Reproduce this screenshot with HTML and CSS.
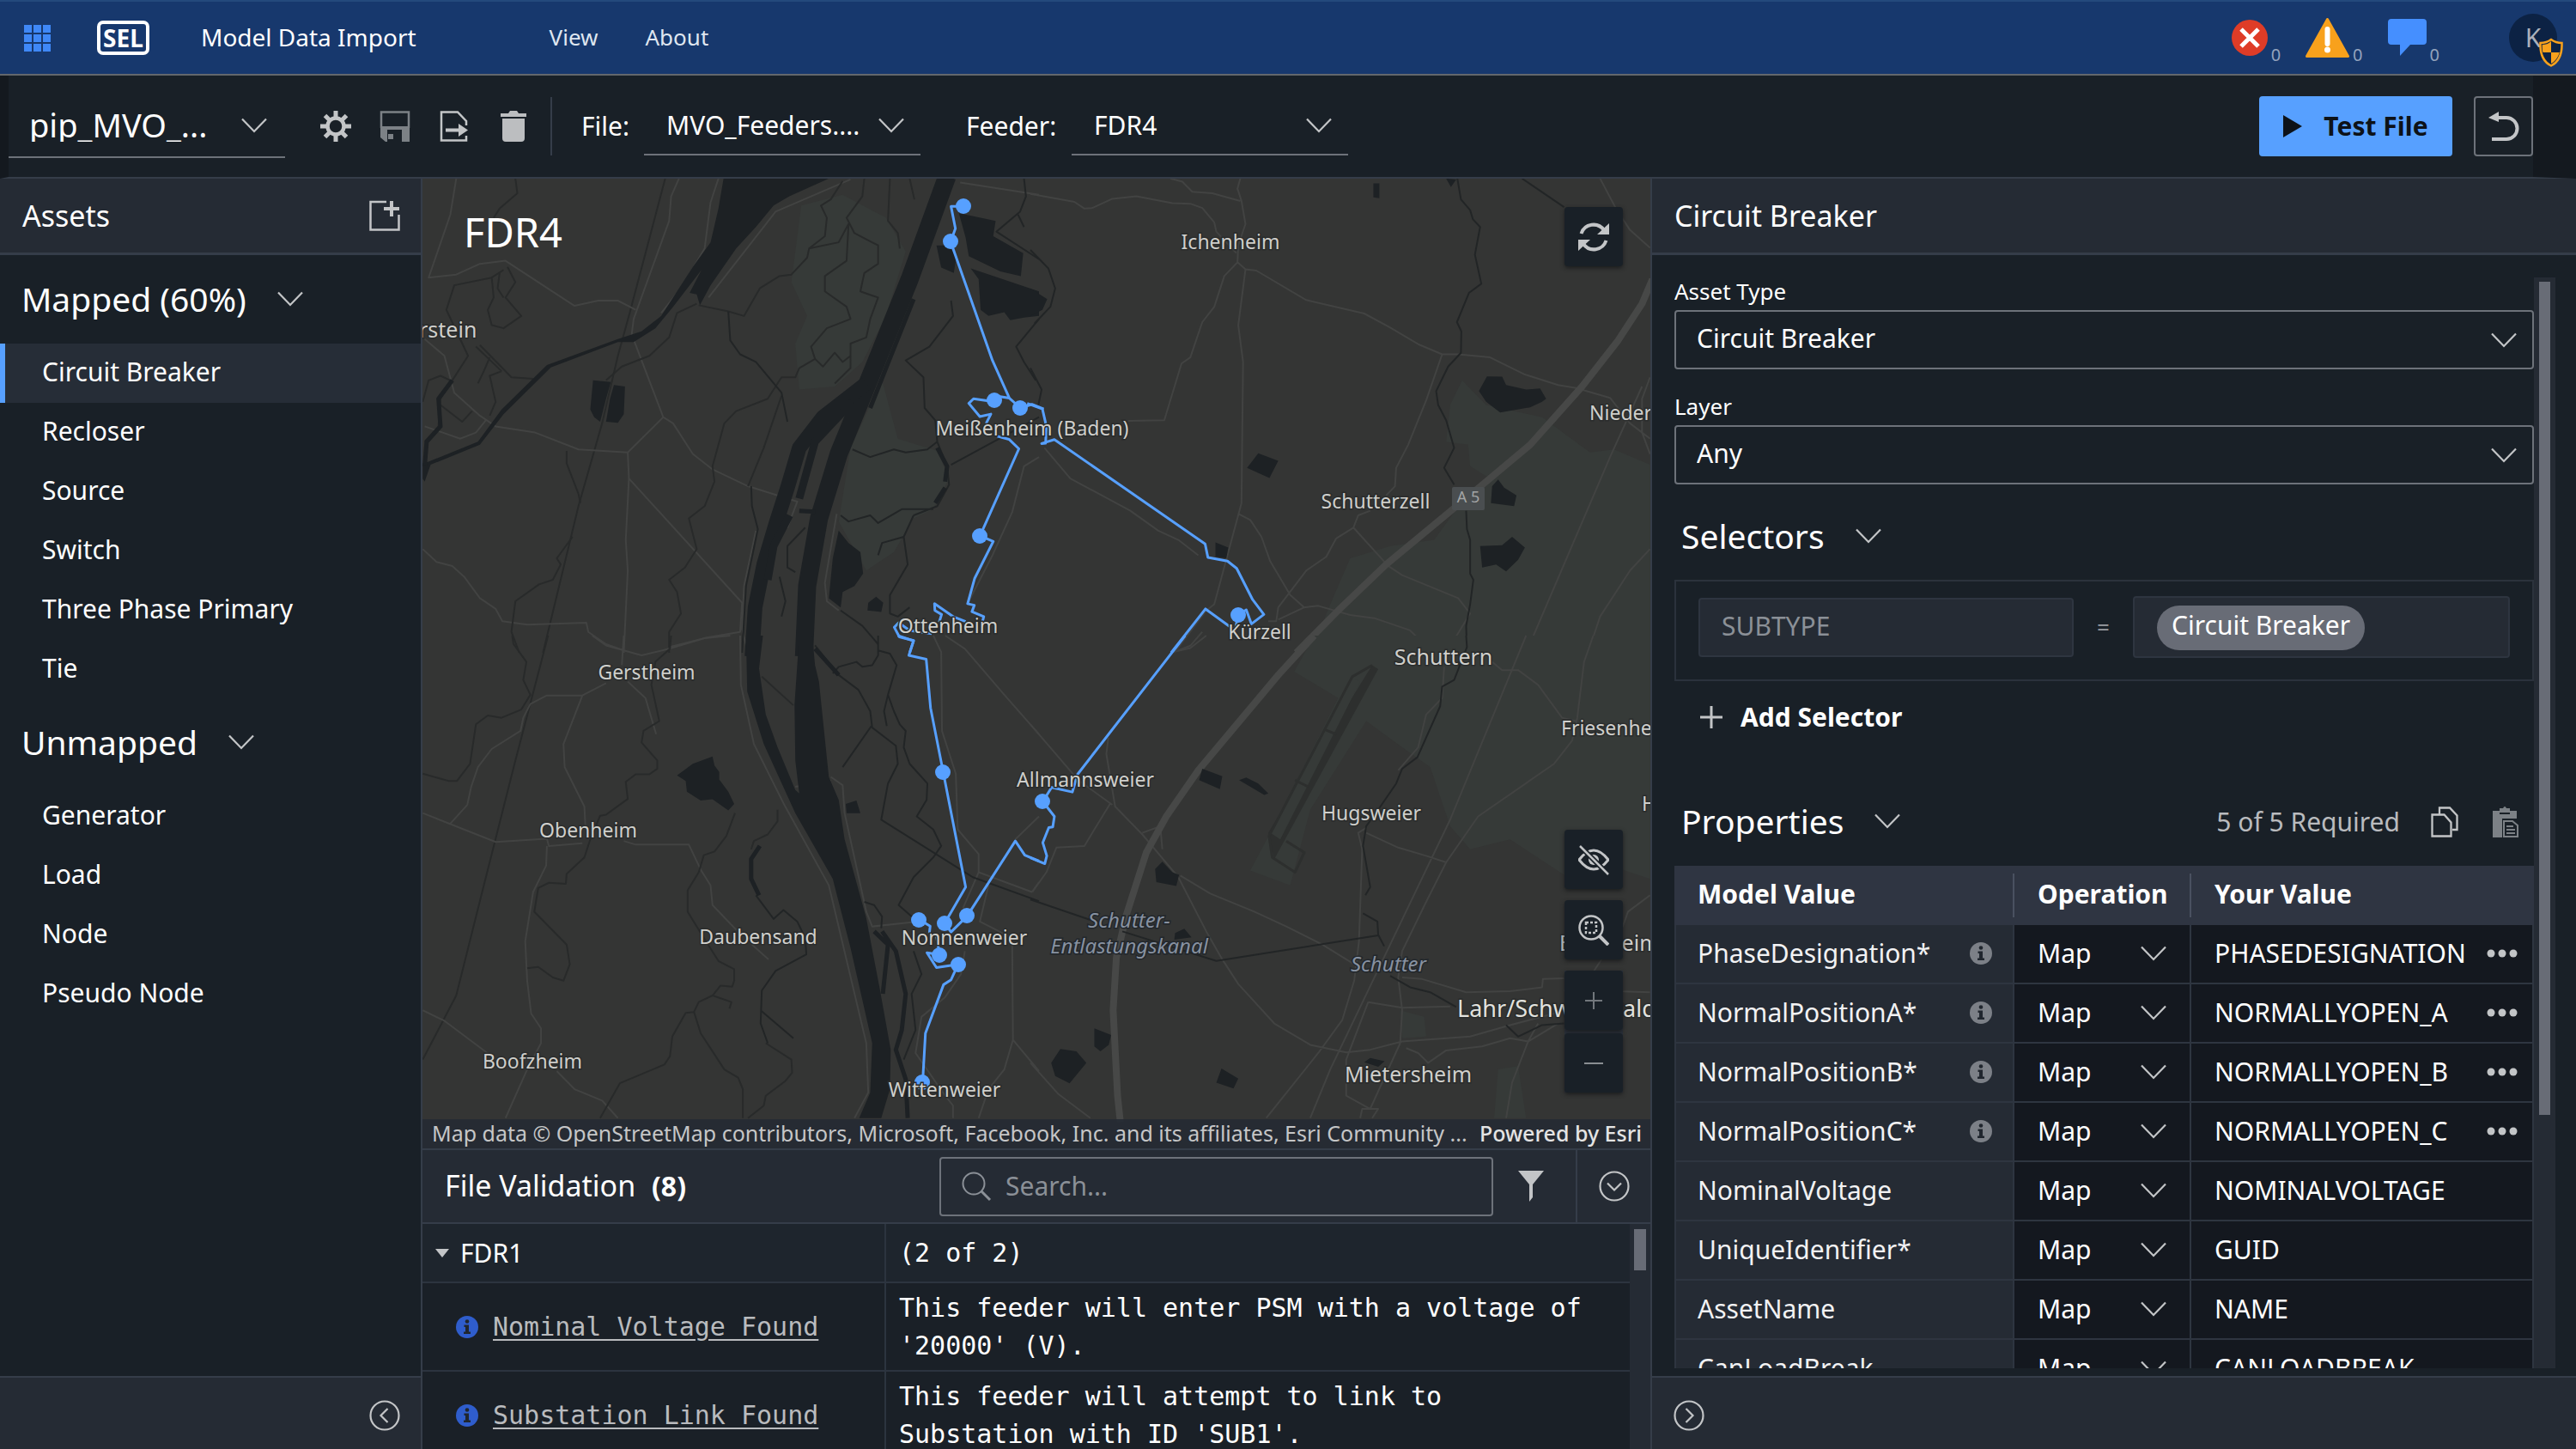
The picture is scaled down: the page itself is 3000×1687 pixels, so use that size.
FILE: index.html
```html
<!DOCTYPE html>
<html lang="en">
<head>
<meta charset="utf-8">
<title>Model Data Import</title>
<link rel="stylesheet" href="styles.css">
</head>
<body>
<svg class="sprite" aria-hidden="true">
  <symbol id="chevron" viewBox="0 0 30 18"><path d="M1 1.500 15 16 29 1.500" fill="none" stroke="currentColor" stroke-width="2.200"/></symbol>
  <symbol id="info" viewBox="0 0 26 26"><circle cx="13" cy="13" r="13" fill="currentColor"/><g fill="#20262e"><circle cx="13" cy="6.500" r="2.300"/><path d="M9.500 10.500h5.500v8h2v2.500h-8v-2.500h2V13h-1.500z"/></g></symbol>
  <symbol id="dots" viewBox="0 0 36 12"><g fill="currentColor"><circle cx="5" cy="6" r="4.500"/><circle cx="18" cy="6" r="4.500"/><circle cx="31" cy="6" r="4.500"/></g></symbol>
  <symbol id="round-chevron" viewBox="0 0 36 36"><g fill="none" stroke="currentColor" stroke-width="2.200"><circle cx="18" cy="18" r="16.500"/><path d="M21.500 10 13.500 18l8 8"/></g></symbol>
</svg>

<div class="app">
  <header class="topbar">
    <button class="icon-btn launcher" aria-label="Applications">
      <svg width="31" height="31" viewBox="0 0 31 31" fill="#3f88f7"><path d="M0 0h9v9H0zM11 0h9v9h-9zM22 0h9v9h-9zM0 11h9v9H0zM11 11h9v9h-9zM22 11h9v9h-9zM0 22h9v9H0zM11 22h9v9h-9zM22 22h9v9h-9z"/></svg>
    </button>
    <span class="logo">SEL</span>
    <h1 class="app-title">Model Data Import</h1>
    <nav class="menu"><a href="#view">View</a><a href="#about">About</a></nav>
    <div class="notices">
      <button class="notice" aria-label="Errors">
        <svg width="42" height="42" viewBox="0 0 42 42"><circle cx="21" cy="21" r="21" fill="#df3c27"/><path d="m11 11 20 20M31 11 11 31" stroke="#fff" stroke-width="5"/></svg><span>0</span></button>
      <button class="notice" aria-label="Warnings">
        <svg width="51" height="46" viewBox="0 0 51 46"><path d="M25.500 1.500 49.500 44.500h-48z" fill="#f8a11c" stroke="#f8a11c" stroke-width="3" stroke-linejoin="round"/><path d="M25.500 13v17" stroke="#fff" stroke-width="6" stroke-linecap="round"/><circle cx="25.500" cy="37" r="3.500" fill="#fff"/></svg><span>0</span></button>
      <button class="notice" aria-label="Messages">
        <svg width="45" height="44" viewBox="0 0 45 44"><path d="M4 0h37q4 0 4 4v22q0 4-4 4H26L14 43V30H4q-4 0-4-4V4q0-4 4-4z" fill="#458fff"/></svg><span>0</span></button>
    </div>
    <button class="avatar" aria-label="Account">K
      <svg class="shield" width="28" height="34" viewBox="0 0 28 34"><path d="M14 2c4 3 8 4 12.500 4C27 19 23 28 14 32.500 5 28 1 19 1.500 6 6 6 10 5 14 2z" fill="#0c2244" stroke="#f8a11c" stroke-width="2.500"/><path d="M14 4v13H4.500C3.700 14 3.500 11 3.800 8 7.500 8 11 7 14 4zM14 17h9.800C22 23 19 27.500 14 30z" fill="#f8a11c"/></svg>
    </button>
  </header>

  <div class="toolbar">
    <div class="drop drop-name"><select aria-label="Project"><option>pip_MVO_...</option></select><svg class="chev"><use href="#chevron"/></svg></div>
    <div class="tools">
      <button class="icon-btn" aria-label="Settings"><svg width="36" height="36" viewBox="0 0 36 36" fill="none" stroke="#c3c5c7"><circle cx="18" cy="18" r="9.500" stroke-width="4.500"/><path d="M18 0v8M18 28v8M0 18h8M28 18h8M5.500 5.500l5 5M25.500 25.500l5 5M30.500 5.500l-5 5M10.500 25.500l-5 5" stroke-width="5"/></svg></button>
      <button class="icon-btn" aria-label="Save"><svg width="36" height="36" viewBox="0 0 36 36"><path d="M2 20V1.500h32V20" fill="none" stroke="#7c8186" stroke-width="2.500"/><path d="M1 18h34v18h-9V22H9v14H7l-6-5z" fill="#7c8186"/><path d="M10 27h6v6h-6z" fill="#7c8186"/></svg></button>
      <button class="icon-btn" aria-label="Export"><svg width="36" height="36" viewBox="0 0 36 36"><path d="M32 17v-5L22 1.500H3v33h29V29" fill="none" stroke="#c3c5c7" stroke-width="2.500"/><path d="M8 20.500h15V15l11 7.500L23 30v-5.500H8z" fill="#c3c5c7"/></svg></button>
      <button class="icon-btn" aria-label="Delete"><svg width="36" height="36" viewBox="0 0 36 36" fill="#bcbec0"><path d="M3 3h9l2-3h8l2 3h9v4H3zM5 9h26v23q0 4-4 4H9q-4 0-4-4z"/></svg></button>
    </div>
    <label class="tool-label label-file" for="file">File:</label>
    <div class="drop drop-file"><select id="file"><option>MVO_Feeders....</option></select><svg class="chev"><use href="#chevron"/></svg></div>
    <label class="tool-label label-feeder" for="feeder">Feeder:</label>
    <div class="drop drop-feeder"><select id="feeder"><option>FDR4</option></select><svg class="chev"><use href="#chevron"/></svg></div>
    <div class="actions">
      <button class="primary"><svg width="22" height="26" viewBox="0 0 22 26"><path d="M0 0 22 13 0 26z" fill="#0d1218"/></svg>Test File</button>
      <button class="outline" aria-label="Undo"><svg width="36" height="36" viewBox="0 0 36 36"><path d="M12 1v12L0 8z" fill="#c3c5c7"/><path d="M9 8h12a12.500 12.500 0 0 1 0 25H4" fill="none" stroke="#c3c5c7" stroke-width="4"/></svg></button>
    </div>
  </div>

  <main class="columns">
    <aside class="side">
      <div class="panel-head"><h2>Assets</h2>
        <button class="icon-btn" aria-label="Add asset"><svg width="36" height="36" viewBox="0 0 36 36" fill="none" stroke="#c3c5c7"><path d="M20 2H1.500v32.500h33V17" stroke-width="2.500"/><path d="M26 1v18M17 10h18" stroke-width="4"/></svg></button>
      </div>
      <div class="side-body">
        <h3 class="section-title">Mapped (60%)<svg class="chev"><use href="#chevron"/></svg></h3>
        <ul class="assets">
          <li><a class="current" href="#cb">Circuit Breaker</a></li>
          <li><a href="#recloser">Recloser</a></li>
          <li><a href="#source">Source</a></li>
          <li><a href="#switch">Switch</a></li>
          <li><a href="#tpp">Three Phase Primary</a></li>
          <li><a href="#tie">Tie</a></li>
        </ul>
        <h3 class="section-title">Unmapped<svg class="chev"><use href="#chevron"/></svg></h3>
        <ul class="assets">
          <li><a href="#generator">Generator</a></li>
          <li><a href="#load">Load</a></li>
          <li><a href="#node">Node</a></li>
          <li><a href="#pseudo">Pseudo Node</a></li>
        </ul>
      </div>
      <div class="panel-foot foot-end"><button class="icon-btn" aria-label="Collapse"><svg width="36" height="36"><use href="#round-chevron"/></svg></button></div>
    </aside>

    <section class="center">
      <div class="map">
        <svg class="map-canvas" viewBox="492 208 1430 1129" preserveAspectRatio="xMidYMid slice">
          <!-- north-west tile -->
          <g class="tile" transform="translate(490 200) scale(.45918 .35714)">
            <path class="park" d="M965 110 1070 75 1180 150 1230 260 1180 470 1120 620 1050 700 960 710 950 560 980 470 940 360z"/>
            <path class="park" d="M1170 680 1210 870 1310 910 1340 1000 1300 1100 1250 1130 1200 1240 1130 1300 1060 1140 1090 900z"/>
            <path class="rail" d="M620 22 530 460 500 600 460 820 400 1090 310 1568"/>
            <path class="road" d="M90 22 75 140 20 345 90 335 150 300 215 290 390 437 450 420 500 420 545 450M655 22 635 80 630 160 540 480 535 530 615 800 525 915 400 905 290 850 190 830 150 795 85 720 60 600 10 545M615 800 640 820 690 920 740 970 830 1025 955 1075 930 1160M525 915 528 1000 815 1405 810 1500 720 1520 630 1550M528 1000 520 1200 525 1300 515 1568M5 1230 40 1272 80 1285 110 1320 150 1390 190 1425 207 1465 270 1476 420 1470 425 1500 470 1540 515 1560M10 830 100 870 140 850 165 810"/>
            <path class="road" d="M755 22 735 100 720 250 660 380 610 460M1090 25 900 130 730 410M1368 35 1568 75M1568 930 1530 960 1500 1110 1450 1250 1390 1400M830 1568 815 1490 820 1350 850 1170M1055 1115 1025 1340 1030 1400 1060 1430"/>
            <path class="stream" d="M240 22 245 70 200 120 185 150M210 320 180 345 85 370 65 450 120 600 80 680M180 345 185 410 170 450 180 500 210 510 255 470 215 410 240 360 220 310M200 330 195 380 210 410M150 565 230 670 285 675M205 650 140 570M175 605 160 650 145 690M205 650 175 665 190 750 175 795M50 760 105 815 130 780M5 750 20 680 50 665 75 680 50 740 45 830 10 880"/>
            <path class="stream" d="M705 435 780 455 820 470 860 380 910 340 940 335 980 280 985 250 1025 210 1030 150 1015 110 1040 90 1070 30M985 250 1060 230 1085 170 1080 290 1025 340 1025 390 1080 440 1090 480 1030 510 990 570 1000 610 960 640 950 670 915 670 880 740 800 780 770 820 740 960 745 1010 720 1090 680 1130 700 1230 670 1290 630 1330 650 1370 660 1440 630 1500 630 1568"/>
            <path class="stream" d="M1125 22 1120 80 1080 150 1100 200 1160 240 1160 300 1125 330 1115 390 1160 410 1140 480 1130 540 1090 560 1090 640 1050 690M1000 610 1020 635 1050 590 1070 620 1090 600M1190 22 1185 160 1210 200 1215 250M1240 22 1252 90M700 430 650 460 630 540 580 600 510 635 470 680M370 910 370 950 400 1050 405 1080M385 1190 345 1260 355 1280 335 1330 300 1345 240 1400 230 1500 250 1568M915 730 870 900 830 1025"/>
            <path class="creek" d="M780 455 785 550 810 595 850 620 915 720 930 815M838 1025 840 1090 855 1165 825 1350 815 1568M1345 420 1350 470 1290 570 1230 615 1275 670 1278 770 1305 810 1310 880 1335 960 1340 1020 1310 1090 1250 1120M1095 905 1140 930 1200 905 1230 915 1285 905 1310 880M1065 1120 1085 1140 1140 1120 1160 1145 1220 1100 1300 1100M1160 1250 1170 1210 1225 1190 1250 1120M1225 1190 1235 1280 1190 1380 1190 1440 1210 1450 1240 1420M975 1160 930 1220 930 1290 950 1305M910 1320 925 1400 915 1450M1065 1430 1120 1480 1160 1540M1345 955 1568 800M1568 480 1510 570 1530 620 1560 680M1530 22 1535 80 1520 130 1460 195 1568 285M1515 140 1530 180"/>
            <path class="water" d="M768 22H1035L935 80 895 110 850 180 800 250 735 370 708 435 700 400 682 395 712 320 640 440 595 510 540 555 500 555 330 638 210 790 150 890 25 955 10 1010 5 1000V950L20 945 145 880 205 775 320 630 500 545 560 520 610 470 690 310 735 230 755 120z"/>
            <path class="water-line wide" d="M1335 15 1240 350 1130 700 1060 920 1010 1130 980 1350 972 1580"/>
            <path class="water-line mid" d="M1130 690 1020 800 960 900 930 1030 900 1150 870 1280 848 1420 840 1580"/>
            <path class="water-line thin" d="M1095 750 1000 880 960 1065M935 1120 895 1220 880 1330"/>
            <path class="water-line hair" d="M1250 415 1180 640 1140 770M80 680 45 740 50 830 15 880 10 960M1310 900 1335 960 1330 1010M1305 1080 1330 1030M960 1105 1000 1108"/>
            <path class="water" d="M1365 135 1458 160 1452 210 1528 265 1522 340 1470 325 1390 275 1382 215zM1395 315 1568 390V470L1530 475 1495 484 1480 458 1440 470 1420 450 1415 350zM1308 240 1340 240 1358 280 1352 330 1320 312zM1060 1170 1085 1210 1115 1240 1122 1310 1100 1350 1070 1370 1065 1420 1035 1390 1045 1260zM1155 1385 1173 1405 1168 1435 1133 1430 1135 1405zM437 680 482 685 470 740 455 815 440 800 430 775zM490 695 518 700 515 790 500 818 470 815 480 740z"/>
          </g>
          <!-- north-east tile -->
          <g class="tile" transform="translate(1200 200) scale(.46556 .35714)">
            <path class="park" d="M1080 680 1140 760 1280 800 1400 915 1460 905 1550 955V1568H700L760 1380 800 1260 900 1220 1010 1200 1060 1110 1150 1000 1100 960 1095 890 1040 880 1050 760z"/>
            <path class="road" d="M0 72 110 98 135 120 155 118 205 88 265 80 355 102 400 104 430 118 460 165 465 195 515 265M350 22 380 32 405 65 455 70 525 95M525 22 518 55 528 95 538 170 520 240 518 295 538 318 520 500 532 620 528 1080 460 1410 440 1430 360 1568M518 295 485 340 460 440 430 490 400 605 378 625 335 810 245 812M538 318 565 322 690 418 835 462 900 508 970 562 1030 595 1070 595 1150 605 1235 660 1320 695 1365 705 1450 737 1500 820 1550 870M1030 595 990 745 945 890 915 965 912 1025 890 1055M850 1105 820 1120 808 1160 765 1195 740 1255 690 1300 620 1420 615 1465 595 1465M808 1160 895 1285 930 1315 1070 1390 1100 1440 1040 1568M520 1115 550 1135 578 1190 600 1270 650 1380 685 1420 620 1460M685 1420 720 1415 800 1445 860 1455 950 1495 1000 1560M35 900 100 1000 250 1105 320 1170 370 1200 420 1250M1425 22 1465 120 1500 190 1550 248M1550 670 1530 740 1530 850 1550 920M1550 1230 1500 1300 1425 1450 1395 1568M1530 700 1450 930 1240 1568M430 1500 400 1545 370 1560"/>
            <path class="motorway" d="M1556 350 1530 430 1470 550 1380 700 1250 890 1140 1010 890 1280 770 1430 665 1568"/>
            <path class="creek" d="M1068 22 1077 90 1100 125 1107 155 1125 180 1112 270 1128 365 1097 395 1067 490 1078 520 1077 590 1045 635 1015 715 1020 760 1040 810 1060 900 1035 965 1060 1020M1090 1105 1092 1165 1100 1200 1100 1310 1108 1330 1100 1410 1090 1480 1092 1568M1230 22 1335 115M0 255 45 315 62 380 50 440 10 495M0 640 28 710 20 760"/>
            <path class="water" d="M858 38H873V86L858 83zM1040 22 1065 25 1052 50zM1142 667 1180 668 1190 695 1240 710 1275 706 1290 740 1280 750 1250 768 1175 785 1140 750 1122 715zM570 918 620 942 598 998 542 965zM1170 1003 1185 1030 1216 1055 1210 1090 1152 1080 1155 1025zM1125 1220 1180 1217 1205 1190 1237 1225 1220 1265 1190 1303 1165 1280 1130 1290zM463 1208 495 1225 490 1260 463 1255zM0 380 42 415 30 450 0 470z"/>
          </g>
          <!-- south-west tile -->
          <g class="tile" transform="translate(490 740) scale(.45918 .38265)">
            <path class="rail" d="M323 0 240 380 160 760 90 1095 5 1290"/>
            <path class="road" d="M515 0 510 90M435 0 470 30 560 60 630 40 720 8 785 0M470 145 410 182H320L278 208 260 250 253 290 180 345 145 400 128 460 118 515 75 572M5 540 110 590 190 628 320 618 325 640 410 632M525 140 570 190 597 300M515 625 545 636H680L710 712 735 760 740 820 800 895M840 940 882 985M410 182 362 330 365 400 415 520 418 590M320 640 318 700 285 780 265 930 270 1050 280 1150 305 1195 305 1240 270 1320 215 1468M5 1140 60 1172 180 1280M345 1325 390 1380 460 1415 500 1468"/>
            <path class="road" d="M810 0 812 150 845 330 920 510 1035 760 1130 1240 1135 1390 1100 1468M1040 430 1070 455 1075 540 1130 840 1145 885 1245 872M950 460 1040 440M1300 0 1320 50 1322 290 1357 420 1362 590 1415 665 1415 720 1375 830M1330 0 1380 40 1480 180 1568 300M1415 720 1550 780 1568 750M1440 760 1418 870 1500 920 1502 1230 1568 1325M1502 1230 1480 1320 1440 1380 1415 1468M1568 550 1508 620M1380 960 1370 1030 1330 1100 1270 1160 1255 1270 1330 1400 1350 1430V1468"/>
            <path class="stream" d="M232 0 235 25 268 80 260 135 278 180 255 225 205 250 170 243 140 270 125 390 92 442 70 442 5 420M635 0 632 40 595 80 585 150 605 260 565 290 560 325 600 380 600 405 580 422 545 422 520 445 525 497 470 545 455 548 430 620 415 675 370 725 368 755 325 752 298 768 288 840 370 940 378 1000 362 1050 335 1040 298 1008 270 1012M797 540 775 610 745 657 718 668 705 720 677 775V840L710 905 755 990 795 1015 795 1050 790 1068 760 1065 740 1095 705 1115 693 1145 672 1148 638 1220 632 1280 618 1305 505 1362 455 1468M740 1095 788 1115 783 1135M693 1145 710 1210 770 1320 805 1345 817 1380V1468M875 1240 940 1290 942 1330 925 1355 875 1400 870 1430 830 1468M905 530 905 565 880 605 845 625 838 650M865 125 945 212"/>
            <path class="creek" d="M850 790 895 862 920 835 955 870 975 920 978 970 900 1020 865 1080 862 1180 880 1240M862 1140 945 1225M1160 0 1160 60 1145 90 1120 95 1105 80 1060 95 1045 115M1160 45 1190 55 1207 90 1185 180 1200 230 1215 270 1230 290 1225 340 1240 390 1285 450 1283 500 1258 550 1300 590 1320 640 1300 675 1250 735 1212 820 1260 870M1185 180 1175 230 1182 275M1143 275 1070 400M1125 810 1150 820 1170 855 1168 890M1250 960 1270 1030 1245 1090 1255 1200 1225 1290"/>
            <path class="creek" d="M1000 30 1060 120 1110 165 1140 230 1145 280 1205 335 1210 390 1185 450 1168 560 1400 735 1568 808"/>
            <path class="water-line hair" d="M1000 40 1060 120M1150 900 1185 940 1172 1090M1170 900 1205 960 1230 1090 1220 1200 1205 1260 1230 1350 1235 1468M860 640 838 680 838 740 858 790"/>
            <path class="water" d="M825 0H868L858 100 875 240 905 340 950 470 960 480 950 380 948 210 960 0H993L1000 90 1010 140 1035 430 1060 500 1075 620 1130 860 1165 1080 1192 1260 1190 1380 1168 1468H1112L1140 1390 1145 1240 1090 950 1045 740 950 540 870 330 828 170zM650 425 690 390 740 368 745 395 757 415V438L780 475 795 512 780 532 740 498 710 502 675 475 672 442zM1078 512 1105 502 1115 540 1080 540z"/>
          </g>
          <!-- south-east tile -->
          <g class="tile" transform="translate(1200 740) scale(.46556 .38265)">
            <path class="park" d="M710 0H1550V740L1450 700 1350 740 1200 620 1100 650 1050 580 1000 400 930 340 840 260 700 530 650 760 550 715 600 600 770 190 660 110zM1170 1320 1220 1310 1240 1468H1160zM925 1140 985 1160 990 1220 930 1225z"/>
            <path class="apron" d="M855 90 870 102 610 680 595 600z"/>
            <path class="park" d="M825 140 805 130 600 600 625 620z"/>
            <path class="apron-line" d="M855 90 805 125 597 610 605 675 662 720 685 660 640 625M735 285 765 300M662 440 695 460"/>
            <path class="road" d="M440 0 400 38 365 48M195 310 190 360 212 520 280 605 370 735 440 900 480 985 520 1060 610 1180 700 1245 790 1268 850 1260 930 1235 1100 1220 1200 1185 1310 1150M280 600 325 580 330 650M200 510 135 640 65 645 40 720 5 780M0 270 120 440 205 515M375 730 450 785 560 840 640 885 730 940 810 1000M1035 95 1030 190 990 240 970 340 920 410M840 585 820 600 830 650 822 930 810 1050 780 1170 720 1270 590 1468M840 600 920 645 990 670 1040 690M1408 0 1385 80 1368 250 1355 320 1310 390 1120 550 1040 690 990 810 930 960 920 1040 930 1140 925 1240 850 1440M1155 80 1180 105 1220 105 1270 150 1330 250 1365 260M1240 0 1050 560 750 1320 700 1468M845 1115 930 1132 1050 1128M845 1115 790 1290 790 1400 850 1440M930 1040 980 1045 1090 1085 1200 1082 1280 1070 1282 1045 1335 1043M1335 1080 1410 1080 1550 1085M940 1255 970 1270 995 1300 1040 1262 1130 1250 1200 1225 1245 1235 1320 1180M1245 1235 1205 1360 1190 1468M1270 1180 1245 1235M1550 790 1495 840 1480 890 1410 1020M0 1300 70 1395 150 1468M825 1468 830 1440 870 1440 855 1468"/>
            <path class="motorway" d="M710 0 620 120 420 410 340 550 290 660 240 850 215 980 207 1140 218 1400 225 1480"/>
            <path class="creek" d="M1090 0 1092 35 1060 135 1030 155 1025 215 968 370 930 405 915 450 870 530 840 580 832 640 850 765 838 790M832 845 868 870 870 910 885 945M0 803 150 865M230 900 465 990 870 912M900 1035 950 1070 1000 1085 1065 1130M1190 1185 1220 1220 1280 1185 1335 1180"/>
            <path class="water" d="M430 405 480 428 474 467 422 440zM540 432 570 450 595 480 585 485 522 440zM330 688 355 720 372 728 365 762 315 750 312 710zM385 892 403 918 360 925 362 905zM160 1195 202 1215 196 1245 175 1265 160 1250zM75 1258 115 1265 140 1300 98 1362 62 1340 52 1300zM478 1317 520 1348 508 1378 465 1360zM850 1285 886 1295 870 1312 835 1298z"/>
          </g>
          <!-- feeder route -->
          <g class="tile" transform="translate(490 200) scale(.45918 .35714)"><path class="feeder" d="M1377 113H1345L1356 185 1344 228 1450 615 1493 738 1521 770 1550 758 1580 773M1493 738 1456 730 1436 746 1402 740 1390 755 1418 798 1446 790 1434 820M1462 862 1492 872 1517 903 1426 1165 1418 1186 1452 1205 1405 1325 1387 1408 1404 1413 1398 1434 1428 1450 1425 1465M1382 1466 1350 1450 1303 1408 1304 1430 1321 1443 1315 1468M1296 1506 1240 1495 1212 1470 1201 1485 1214 1516 1250 1528 1240 1568"/></g>
          <g class="tile" transform="translate(1200 200) scale(.46556 .35714)"><path class="feeder" d="M-8 755 30 773 40 830 38 885 28 886 60 873 437 1213 444 1257 493 1269 516 1293 556 1395 584 1443 553 1474 540 1428 520 1444 512 1495 438 1425 352 1568"/></g>
          <g class="tile" transform="translate(490 740) scale(.45918 .38265)"><path class="feeder" d="M1210 0 1250 16 1238 60 1282 72 1293 220 1325 415 1382 765 1329 875 1345 902 1386 853 1508 625 1532 668 1568 686M1264 864 1292 884 1290 905M1308 915 1316 971 1284 965 1308 1010 1363 1000 1345 1047 1326 1062 1280 1210 1273 1358"/></g>
          <g class="tile" transform="translate(1200 740) scale(.46556 .38265)"><path class="feeder" d="M387 0 118 422 105 476 53 462 31 505 60 550 56 582 46 584 31 630 41 670 36 694 0 676"/></g>
          <g class="stops"><circle cx="1122" cy="240" r="9"/><circle cx="1107" cy="281" r="9"/><circle cx="1158" cy="466" r="9"/><circle cx="1188" cy="475" r="9"/><circle cx="1141" cy="624" r="9"/><circle cx="1442" cy="716" r="9"/><circle cx="1098" cy="899" r="9"/><circle cx="1070" cy="1071" r="9"/><circle cx="1100" cy="1075" r="9"/><circle cx="1126" cy="1066" r="9"/><circle cx="1094" cy="1112" r="9"/><circle cx="1116" cy="1123" r="9"/><circle cx="1074" cy="1260" r="9"/><circle cx="1214" cy="933" r="9"/></g>
          <rect x="1691" y="567" width="38" height="27" rx="2" fill="#4a4e50"/>
          <text class="shield-text" x="1710" y="585">A 5</text>
          <g class="places">
            <text x="1433" y="290">Ichenheim</text><text x="1202" y="507">Meißenheim (Baden)</text><text x="1602" y="592">Schutterzell</text>
            <text x="1104" y="737">Ottenheim</text><text x="1467" y="744">Kürzell</text><text class="large" x="1681" y="774">Schuttern</text><text x="753" y="791">Gerstheim</text>
            <text x="685" y="975">Obenheim</text><text x="883" y="1099">Daubensand</text><text x="620" y="1244">Boofzheim</text><text x="1123" y="1100">Nonnenweier</text>
            <text x="1100" y="1277">Wittenweier</text><text x="1264" y="916">Allmannsweier</text><text x="1597" y="955">Hugsweier</text>
            <text class="large" x="1640" y="1260">Mietersheim</text>
          </g>
          <g class="places at-start">
            <text class="large" x="488" y="393">rstein</text><text x="1851" y="489">Nieder</text><text x="1818" y="856">Friesenhe</text><text x="1912" y="944">H</text><text class="large" x="1816" y="1107">Burgheim</text><text class="city" x="1697" y="1184">Lahr/Schwarzwald</text>
          </g>
          <g class="places waterway"><text x="1315" y="1080">Schutter-</text><text x="1315" y="1110">Entlastungskanal</text><text x="1617" y="1131">Schutter</text></g>
        </svg>
        <h2 class="map-title">FDR4</h2>
        <button class="map-btn map-refresh" aria-label="Refresh"><svg width="36" height="36" viewBox="0 0 36 36" fill="none" stroke="#c3c5c7" stroke-width="4"><path d="M3.500 14A15 15 0 0 1 30 10M32.500 22A15 15 0 0 1 6 26"/><path d="M36 2v13H22zM0 34V21h14z" fill="#c3c5c7" stroke="none"/></svg></button>
        <div class="map-controls">
          <button class="map-btn" aria-label="Hide layers"><svg width="36" height="36" viewBox="0 0 36 36" fill="none" stroke="#c3c5c7"><path d="M1 18q17-22 34 0-17 22-34 0z" stroke-width="3"/><circle cx="18" cy="18" r="6" fill="#c3c5c7" stroke="none"/><path d="M3 3 35 35" stroke="#192027" stroke-width="6"/><path d="M2 2 35 35" stroke-width="2.500"/></svg></button>
          <button class="map-btn" aria-label="Zoom to extent"><svg width="36" height="36" viewBox="0 0 36 36" fill="none" stroke="#c3c5c7"><circle cx="15" cy="15" r="13.500" stroke-width="2.500"/><path d="M9 9h12v12H9z" stroke-width="2.500" stroke-dasharray="3 2"/><path d="m25 25 10 10" stroke-width="4"/></svg></button>
          <div class="zoom-pair">
            <button class="map-btn" aria-label="Zoom in"><svg width="22" height="22" viewBox="0 0 22 22" stroke="#72777c" stroke-width="2"><path d="M11 1v20M1 11h20"/></svg></button>
            <button class="map-btn" aria-label="Zoom out"><svg width="22" height="22" viewBox="0 0 22 22" stroke="#8a8e92" stroke-width="2"><path d="M0 11h22"/></svg></button>
          </div>
        </div>
        <div class="attribution"><span>Map data © OpenStreetMap contributors, Microsoft, Facebook, Inc. and its affiliates, Esri Community ...</span><strong>Powered by Esri</strong></div>
      </div>

      <div class="validation">
        <div class="val-head">
          <h2>File Validation <b>(8)</b></h2>
          <label class="search"><svg width="36" height="36" viewBox="0 0 36 36" fill="none" stroke="#8b9097"><circle cx="15" cy="15" r="12.500" stroke-width="2"/><path d="m24 24 10 10" stroke-width="3"/></svg><input type="text" placeholder="Search..." aria-label="Search"></label>
          <button class="icon-btn filter" aria-label="Filter"><svg width="30" height="36" viewBox="0 0 30 36"><path d="M0 0h30L17 16v15l-4 5V16z" fill="#c3c5c7"/></svg></button>
          <button class="icon-btn val-toggle" aria-label="Collapse"><svg width="36" height="36" class="down"><use href="#round-chevron"/></svg></button>
        </div>
        <div class="val-body">
          <table class="val-table">
            <tr class="group"><th scope="row"><span class="line"><svg width="16" height="10" viewBox="0 0 16 10"><path d="M0 0h16L8 10z" fill="#c3c5c7"/></svg>FDR1</span></th><td>(2 of 2)</td></tr>
            <tr><th scope="row"><span class="line item"><svg width="26" height="26"><use href="#info"/></svg><a href="#nv">Nominal Voltage Found</a></span></th><td>This feeder will enter PSM with a voltage of '20000' (V).</td></tr>
            <tr><th scope="row"><span class="line item"><svg width="26" height="26"><use href="#info"/></svg><a href="#sl">Substation Link Found</a></span></th><td>This feeder will attempt to link to Substation with ID 'SUB1'.</td></tr>
          </table>
          <div class="val-track"><div class="val-thumb"></div></div>
        </div>
      </div>
    </section>

    <aside class="detail">
      <div class="panel-head"><h2>Circuit Breaker</h2></div>
      <div class="detail-body">
        <form class="form">
          <div class="field"><label for="type">Asset Type</label><div class="box-select"><select id="type"><option>Circuit Breaker</option></select><svg class="chev"><use href="#chevron"/></svg></div></div>
          <div class="field"><label for="layer">Layer</label><div class="box-select"><select id="layer"><option>Any</option></select><svg class="chev"><use href="#chevron"/></svg></div></div>
          <h3 class="form-title selectors">Selectors<svg class="chev"><use href="#chevron"/></svg></h3>
          <div class="selector"><input type="text" placeholder="SUBTYPE" aria-label="Attribute" disabled><span class="eq">=</span><div class="chips"><span class="chip">Circuit Breaker</span></div></div>
          <button type="button" class="add"><svg width="28" height="28" viewBox="0 0 28 28" stroke="#c3c5c7" stroke-width="3"><path d="M14 1v26M1 14h26"/></svg>Add Selector</button>
          <div class="props-head"><h3 class="form-title">Properties<svg class="chev"><use href="#chevron"/></svg></h3><span class="required">5 of 5 Required</span>
            <button type="button" class="icon-btn" aria-label="Copy"><svg width="32" height="36" viewBox="0 0 32 36" fill="none" stroke="#c3c5c7" stroke-width="2.300"><path d="M10 9V1.500h12l8.500 9V27H25"/><path d="M1.500 9.500h14l8 9v16h-22z"/></svg></button>
            <button type="button" class="icon-btn" aria-label="Paste"><svg width="30" height="36" viewBox="0 0 30 36"><path d="M0 5h28v9H11v22H0zM8 2h4q2-4 4 0h4v6H8z" fill="#7c8186"/><path d="M8 8h12" stroke="#192027" stroke-width="2"/><path d="M13 17h10l6 5v13H13zM16 23h8M16 27h10M16 31h10" fill="none" stroke="#7c8186" stroke-width="2"/></svg></button>
          </div>
          <table class="props">
            <thead><tr><th><span>Model Value</span></th><th><span>Operation</span></th><th><span>Your Value</span></th></tr></thead>
            <tbody>
              <tr><th scope="row"><div>PhaseDesignation*<svg width="26" height="26"><use href="#info"/></svg></div></th><td><div class="cell-select"><select aria-label="Operation"><option>Map</option></select><svg class="chev"><use href="#chevron"/></svg></div></td><td><div>PHASEDESIGNATION<button type="button" aria-label="More"><svg width="36" height="12"><use href="#dots"/></svg></button></div></td></tr>
              <tr><th scope="row"><div>NormalPositionA*<svg width="26" height="26"><use href="#info"/></svg></div></th><td><div class="cell-select"><select aria-label="Operation"><option>Map</option></select><svg class="chev"><use href="#chevron"/></svg></div></td><td><div>NORMALLYOPEN_A<button type="button" aria-label="More"><svg width="36" height="12"><use href="#dots"/></svg></button></div></td></tr>
              <tr><th scope="row"><div>NormalPositionB*<svg width="26" height="26"><use href="#info"/></svg></div></th><td><div class="cell-select"><select aria-label="Operation"><option>Map</option></select><svg class="chev"><use href="#chevron"/></svg></div></td><td><div>NORMALLYOPEN_B<button type="button" aria-label="More"><svg width="36" height="12"><use href="#dots"/></svg></button></div></td></tr>
              <tr><th scope="row"><div>NormalPositionC*<svg width="26" height="26"><use href="#info"/></svg></div></th><td><div class="cell-select"><select aria-label="Operation"><option>Map</option></select><svg class="chev"><use href="#chevron"/></svg></div></td><td><div>NORMALLYOPEN_C<button type="button" aria-label="More"><svg width="36" height="12"><use href="#dots"/></svg></button></div></td></tr>
              <tr><th scope="row"><div>NominalVoltage</div></th><td><div class="cell-select"><select aria-label="Operation"><option>Map</option></select><svg class="chev"><use href="#chevron"/></svg></div></td><td><div>NOMINALVOLTAGE</div></td></tr>
              <tr><th scope="row"><div>UniqueIdentifier*</div></th><td><div class="cell-select"><select aria-label="Operation"><option>Map</option></select><svg class="chev"><use href="#chevron"/></svg></div></td><td><div>GUID</div></td></tr>
              <tr><th scope="row"><div>AssetName</div></th><td><div class="cell-select"><select aria-label="Operation"><option>Map</option></select><svg class="chev"><use href="#chevron"/></svg></div></td><td><div>NAME</div></td></tr>
              <tr><th scope="row"><div>CanLoadBreak</div></th><td><div class="cell-select"><select aria-label="Operation"><option>Map</option></select><svg class="chev"><use href="#chevron"/></svg></div></td><td><div>CANLOADBREAK</div></td></tr>
            </tbody>
          </table>
        </form>
        <div class="track"><div class="thumb"></div></div>
      </div>
      <div class="panel-foot"><button class="icon-btn" aria-label="Collapse"><svg width="36" height="36" class="flip"><use href="#round-chevron"/></svg></button></div>
    </aside>
  </main>
</div>
</body>
</html>
```

FILE: styles.css
```css
* { box-sizing: border-box; }
body { margin: 0; background: #192027; color: #fff; font: 30px/40px "Noto Sans", sans-serif; }
h1, h2, h3, ul { margin: 0; padding: 0; font-weight: 400; }
ul { list-style: none; }
a { color: inherit; text-decoration: none; }
button, select, input { font: inherit; color: inherit; margin: 0; padding: 0; border: 0; background: none; }
select { appearance: none; width: 100%; height: 100%; }
svg { display: block; flex: none; }
.sprite { position: absolute; width: 0; height: 0; }
.icon-btn { display: block; flex: none; }
.chev { width: 30px; height: 18px; color: #c3c5c7; pointer-events: none; }

.app { display: flex; flex-direction: column; height: 100vh; overflow: hidden; }

.topbar { flex: none; display: flex; align-items: center; height: 88px; padding: 0 22px 0 28px; background: #17386d; border-top: 2px solid #24497c; border-bottom: 2px solid #63676c; }
.logo { display: flex; justify-content: center; margin-left: 54px; width: 61px; height: 40px; border: 4px solid #fff; border-radius: 7px; font-size: 28px; line-height: 32px; font-weight: 700; }
.app-title { margin-left: 60px; font-size: 28px; padding-bottom: 2px; }
.menu { display: flex; gap: 55px; margin-left: 155px; padding-bottom: 2px; font-size: 26px; color: #dfe6f0; }
.notices { display: flex; gap: 29px; margin-left: auto; }
.notice { display: flex; align-items: center; gap: 4px; }
.notice span { align-self: flex-end; font-size: 20px; line-height: 20px; color: #93a3bd; padding-top: 40px; }
.avatar { position: relative; margin-left: 81px; width: 56px; height: 56px; border-radius: 50%; background: #0c2244; color: #aab0ba; font-size: 30px; }
.shield { position: absolute; right: -7px; bottom: -6px; }

.toolbar { flex: none; display: flex; align-items: center; height: 120px; border: solid #14191f; border-width: 0 50px 0 10px; border-bottom: 2px solid #353d49; }
.drop { position: relative; display: flex; align-items: center; width: 322px; height: 68px; border-bottom: 2px solid #6d727a; }
.drop select { padding-left: 26px; }
.drop .chev { position: absolute; right: 19px; }
.drop-name { height: 74px; font-size: 38px; }
.drop-name select { padding: 0 0 2px 24px; }
.drop-name .chev { right: 21px; }
.tools { display: flex; gap: 33px; margin-left: 41px; padding-right: 25px; }
.label-file { border-left: 2px solid #353d49; line-height: 68px; padding-left: 34px; width: 109px; }
.label-feeder { margin-left: 53px; width: 123px; }
.actions { display: flex; gap: 25px; margin-left: auto; }
.primary { display: flex; align-items: center; justify-content: center; gap: 25px; width: 225px; height: 70px; border-radius: 4px; background: #57a0ff; color: #0d1218; font-weight: 700; }
.outline { display: flex; align-items: center; justify-content: center; width: 69px; height: 70px; border: 2px solid #6d727a; border-radius: 4px; }

.columns { flex: 1; min-height: 0; display: grid; grid-template-columns: 492px minmax(0, 1fr) 1078px; }
.panel-head { flex: none; display: flex; align-items: center; justify-content: space-between; height: 89px; padding: 0 24px 0 26px; background: #252b34; border-bottom: 3px solid #353d49; }
.panel-head h2 { font-size: 34px; }
.panel-foot { flex: none; display: flex; align-items: center; height: 85px; padding: 4px 24px 0; background: #252b34; border-top: 2px solid #353d49; }
.foot-end { justify-content: flex-end; }
.panel-foot, .val-toggle { color: #c3c5c7; }
.flip { transform: rotate(180deg); }
.down { transform: rotate(-90deg); }

.side { display: flex; flex-direction: column; min-height: 0; border-right: 2px solid #353d49; }
.side-body { flex: 1; min-height: 0; overflow: hidden; }
.section-title { display: flex; align-items: center; gap: 36px; height: 103px; padding: 0 0 2px 25px; font-size: 39px; }
.assets a { display: block; height: 69px; line-height: 65px; padding-left: 49px; }
.assets .current { background: #262d37; box-shadow: inset 6px 0 #57a0ff; }
.assets + .section-title { height: 102px; }

.center { display: flex; flex-direction: column; min-width: 0; min-height: 0; }
.map { position: relative; flex: 1; min-height: 0; background: #343534; overflow: hidden; }
.map-canvas { position: absolute; inset: 0; width: 100%; height: 100%; }
.tile path { vector-effect: non-scaling-stroke; fill: none; stroke-linejoin: round; }
.tile .park { fill: #363a38; }
.tile .water { fill: #1d2124; }
.tile .water-line { stroke: #1d2124; }
.tile .wide { stroke-width: 21px; }
.tile .mid { stroke-width: 17px; }
.tile .thin { stroke-width: 9px; }
.tile .hair { stroke-width: 5px; }
.tile .road { stroke: #424342; stroke-width: 2px; }
.tile .motorway { stroke: #474847; stroke-width: 8px; }
.tile .rail, .tile .stream { stroke: #282a2a; stroke-width: 2px; }
.tile .creek { stroke: #222526; stroke-width: 2px; }
.tile .apron { fill: #2d2f2e; }
.tile .apron-line { stroke: #2d2f2e; stroke-width: 3px; }
.tile .feeder { stroke: #57a0ff; stroke-width: 3px; }
.stops { fill: #57a0ff; }
.shield-text { font-size: 18px; fill: #a3a5a5; text-anchor: middle; }
.places { font-size: 23px; fill: #cfcfcb; text-anchor: middle; paint-order: stroke; stroke: #2a2c2c; stroke-width: 3px; }
.at-start { text-anchor: start; }
.large { font-size: 25px; }
.city { font-size: 27px; fill: #e2e2de; }
.waterway { font-style: italic; fill: #8791a0; stroke: #22272c; font-size: 24px; }
.map-title { position: absolute; left: 48px; top: 32px; font-size: 47px; line-height: 60px; }
.map-btn { display: flex; align-items: center; justify-content: center; width: 68px; height: 69px; border-radius: 4px; background: #192027; box-shadow: 0 2px 5px #1a1c1d; }
.map-refresh { position: absolute; top: 33px; right: 32px; }
.map-controls { position: absolute; right: 32px; bottom: 65px; display: flex; flex-direction: column; gap: 13px; }
.zoom-pair { display: flex; flex-direction: column; gap: 4px; background: #2b323d; }
.attribution { position: absolute; left: 0; right: 0; bottom: 0; display: flex; justify-content: space-between; height: 34px; padding: 0 10px 0 11px; background: rgba(37, 42, 51, .9); font-size: 25px; line-height: 32px; color: #c5c6c7; white-space: nowrap; }
.attribution strong { font-weight: 500; color: #e4e4e4; }

.validation { flex: none; display: flex; flex-direction: column; height: 350px; border-top: 2px solid #353d49; }
.val-head { flex: none; display: flex; align-items: center; height: 86px; background: #252b34; border-bottom: 2px solid #353d49; }
.val-head h2 { margin-left: 26px; padding-bottom: 2px; font-size: 34px; }
.val-head b { margin-left: 10px; font-size: 32px; }
.search { display: flex; align-items: center; gap: 16px; width: 645px; height: 69px; margin-left: auto; padding-left: 23px; border: 2px solid #6d727a; border-radius: 4px; }
.search input { flex: 1; min-width: 0; }
.search input::placeholder, .selector input::placeholder { color: #8b9097; opacity: 1; }
.filter { margin: 0 37px 0 29px; }
.val-toggle { display: flex; align-items: center; justify-content: center; height: 84px; width: 87px; border-left: 2px solid #353d49; }
.val-body { flex: 1; min-height: 0; display: flex; overflow: hidden; background: #1a2027; }
.val-table { flex: 1; align-self: flex-start; border-collapse: collapse; table-layout: fixed; font: 30px/44px "DejaVu Sans Mono", monospace; }
.val-table th, .val-table td { height: 103px; padding: 6px 30px 6px 15px; border-bottom: 2px solid #2c343f; font-weight: 400; text-align: left; }
.val-table th { width: 539px; padding-right: 0; border-right: 2px solid #2c343f; }
.val-table .group th, .val-table .group td { height: 68px; background: #1e252d; }
.line { display: flex; align-items: center; gap: 13px; }
.group .line { font-family: "Noto Sans", sans-serif; }
.item { gap: 17px; padding-left: 24px; color: #2f5dcc; }
.item a { color: #b9bbbe; text-decoration: underline; text-decoration-thickness: 2px; text-underline-offset: 4px; }
.val-track { flex: none; width: 24px; padding: 6px 5px; background: #252b34; }
.val-thumb { height: 48px; background: #686c76; }

.detail { display: flex; flex-direction: column; min-height: 0; border-left: 2px solid #353d49; }
.detail .panel-foot { padding-left: 25px; }
.detail-body { flex: 1; min-height: 0; display: flex; padding: 0 24px 9px 26px; }
.form { flex: 1; min-width: 0; overflow: hidden; padding-top: 24px; }
.field { margin-bottom: 25px; }
.field label { display: block; font-size: 26px; line-height: 36px; margin-bottom: 4px; }
.box-select { position: relative; display: flex; align-items: center; height: 69px; border: 2px solid #6d727a; border-radius: 4px; }
.box-select select { padding: 0 0 4px 24px; }
.box-select .chev { position: absolute; right: 18px; }
.form-title { display: flex; align-items: center; gap: 36px; height: 62px; padding: 0 0 2px 8px; font-size: 39px; }
.selectors { margin: 30px 0 19px; }
.selector { display: flex; align-items: center; justify-content: space-between; height: 118px; padding: 17px 26px 25px; border: 2px solid #2b323c; }
.selector input { width: 437px; height: 69px; padding: 0 0 4px 25px; border: 2px solid #2e3540; border-radius: 4px; background: #252b34; }
.eq { color: #9a9da2; font-size: 26px; }
.chips { width: 439px; height: 72px; padding: 9px 26px; border: 2px solid #2e3540; border-radius: 4px; background: #252b34; }
.chip { display: inline-block; height: 52px; padding: 0 17px; border-radius: 26px; background: #686c76; line-height: 46px; }
.add { display: flex; align-items: center; gap: 20px; height: 60px; margin-top: 12px; padding-left: 29px; font-weight: 700; }
.props-head { display: flex; align-items: center; margin: 61px 0 20px; }
.required { margin-left: auto; color: #b9bbbe; }
.props-head .icon-btn { margin-left: 36px; }
.props-head .icon-btn:last-child { margin: 0 18px 0 40px; }
.props { width: 100%; border-collapse: separate; border-spacing: 0; table-layout: fixed; }
.props th, .props td { height: 69px; padding: 0; text-align: left; vertical-align: top; font-weight: 400; border-bottom: 2px solid #2e3540; border-right: 2px solid #2e3540; }
.props th:first-child { width: 396px; }
.props th:nth-child(2) { width: 206px; }
.props thead th { background: #2f3542; font-weight: 700; border: 0; vertical-align: middle; }
.props thead span { display: block; height: 51px; line-height: 47px; padding-left: 27px; border-right: 2px solid #4a5160; }
.props thead th:last-child span { border: 0; }
.props tbody th { background: #252b34; border-left: 2px solid #2e3540; }
.props td { background: #14181f; }
.props td > div, .props th > div { display: flex; align-items: center; justify-content: space-between; height: 65px; padding: 0 17px 0 27px; }
.props th > div { padding: 0 24px 0 25px; color: #f2f2f3; }
.props th svg { color: #7c8087; }
.props td button { color: #c3c5c7; }
.cell-select .chev { margin-left: -30px; }
.props .cell-select { padding-right: 27px; }
.track { flex: none; width: 25px; margin-top: 26px; padding: 5px 6px; background: #252b34; }
.thumb { height: 77%; background: #686c76; }
```
